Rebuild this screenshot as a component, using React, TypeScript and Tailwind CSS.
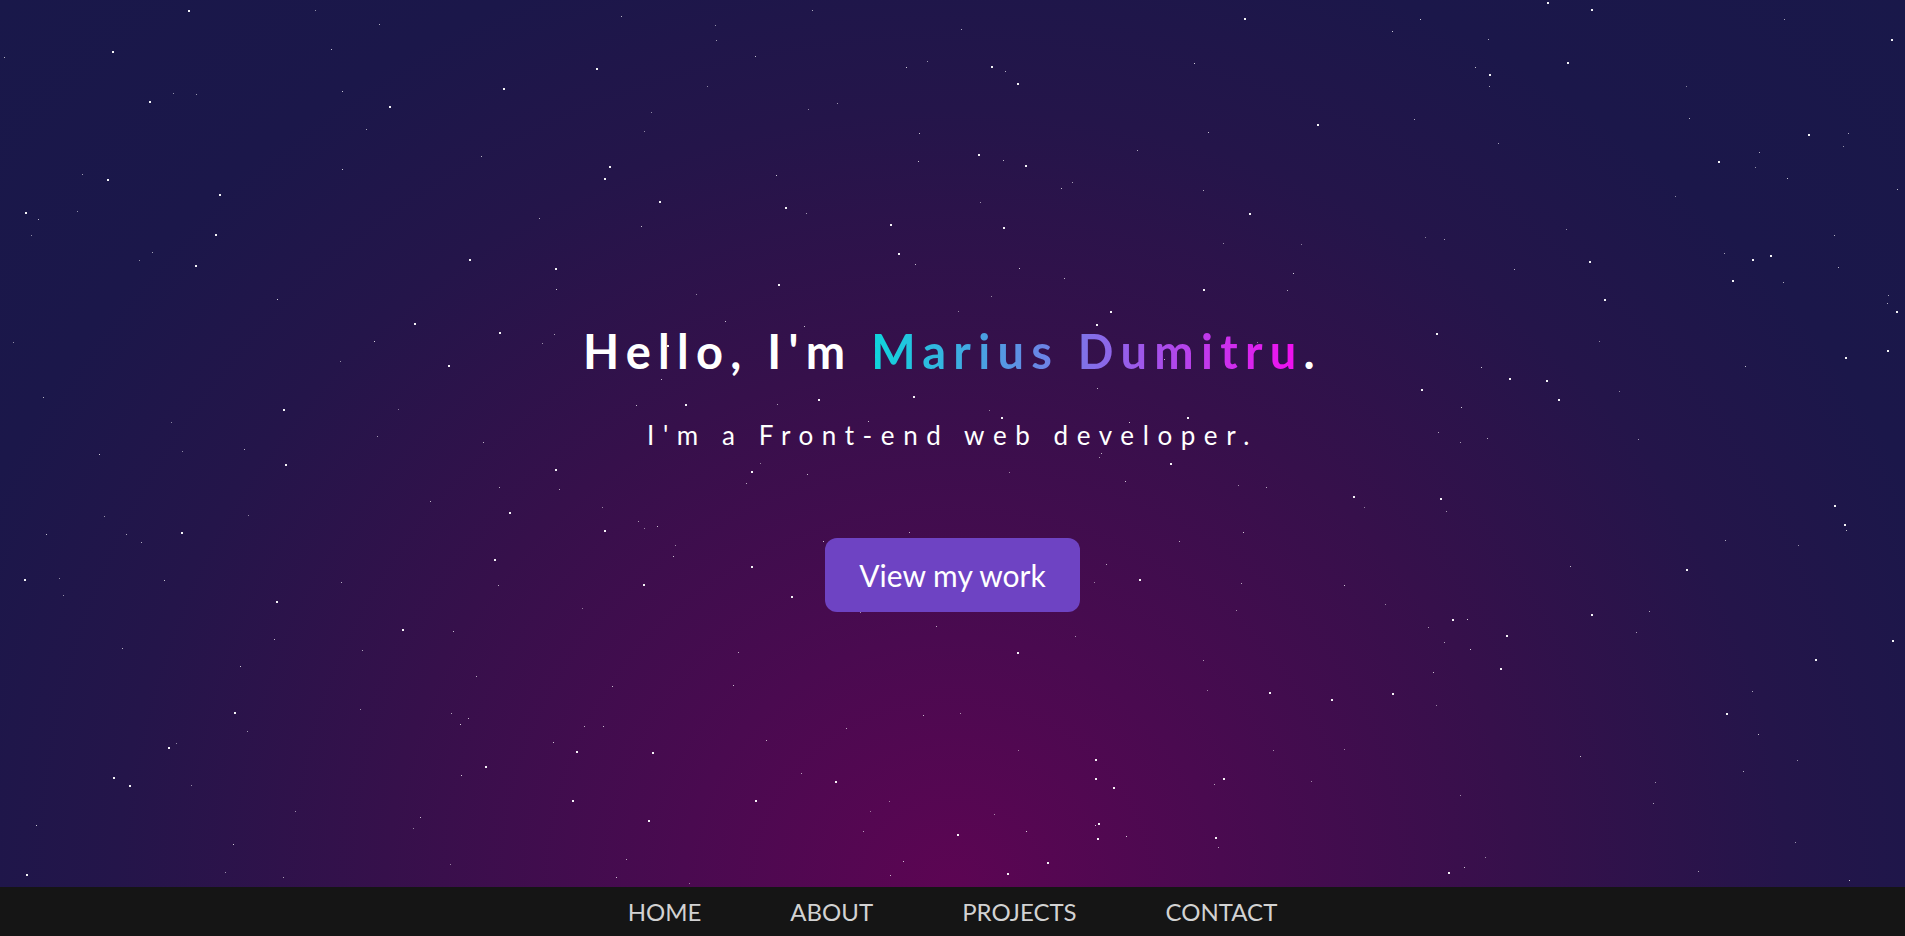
import { useMemo } from "react";

type Star = { x: number; y: number; size: number; alpha: number };

// small seeded generator so the sky stays the same each render
const makeStars = (count: number) => {
  let seed = 20240611;
  const rand = () => {
    seed = (seed * 1664525 + 1013904223) % 4294967296;
    return seed / 4294967296;
  };
  const stars: Star[] = [];
  for (let i = 0; i < count; i++) {
    const big = rand() < 0.35;
    stars.push({
      x: rand() * 100,
      y: rand() * 100,
      size: big ? 2 : 1,
      alpha: big ? 0.95 : 0.45 + rand() * 0.35,
    });
  }
  return stars;
};

const navItems = ["HOME", "ABOUT", "PROJECTS", "CONTACT"];

export default function App() {
  const stars = useMemo(() => makeStars(360), []);

  return (
    <div
      className="flex h-[936px] w-full flex-col overflow-hidden"
      style={{ fontFamily: "Lato, 'Open Sans', sans-serif" }}
    >
      <section className="relative flex flex-1 flex-col items-center bg-[radial-gradient(ellipse_at_bottom,#5c0553_0%,#4a0a50_20%,#36104b_42%,#24154a_62%,#1b174a_78%,#19184a_100%)] pt-[324px]">
        {stars.map((s, i) => (
          <span
            key={i}
            className="absolute bg-white"
            style={{
              left: `${s.x}%`,
              top: `${s.y}%`,
              width: s.size,
              height: s.size,
              opacity: s.alpha,
            }}
          />
        ))}

        <h1 className="relative text-[47px] leading-[54px] font-bold tracking-[0.155em] text-white">
          Hello, I'm{" "}
          <span className="bg-[linear-gradient(90deg,#0ed6dc_0%,#8270e8_50%,#f50cf0_100%)] bg-clip-text text-transparent">
            Marius Dumitru
          </span>
          .
        </h1>

        <p className="relative mt-[42px] text-[26px] leading-[30px] font-normal tracking-[0.33em] text-white">
          I'm a Front-end web developer.
        </p>

        <button className="relative mt-[88px] flex h-[74px] w-[255px] items-center justify-center rounded-[12px] bg-[#6e43c3] text-[30px] text-white">
          View my work
        </button>
      </section>

      <nav className="flex h-[49px] shrink-0 items-center justify-center gap-[89px] bg-[#151515] text-[24px] text-[#d2d2d2]">
        {navItems.map((item) => (
          <a key={item} href="#" className="leading-none">
            {item}
          </a>
        ))}
      </nav>
    </div>
  );
}
